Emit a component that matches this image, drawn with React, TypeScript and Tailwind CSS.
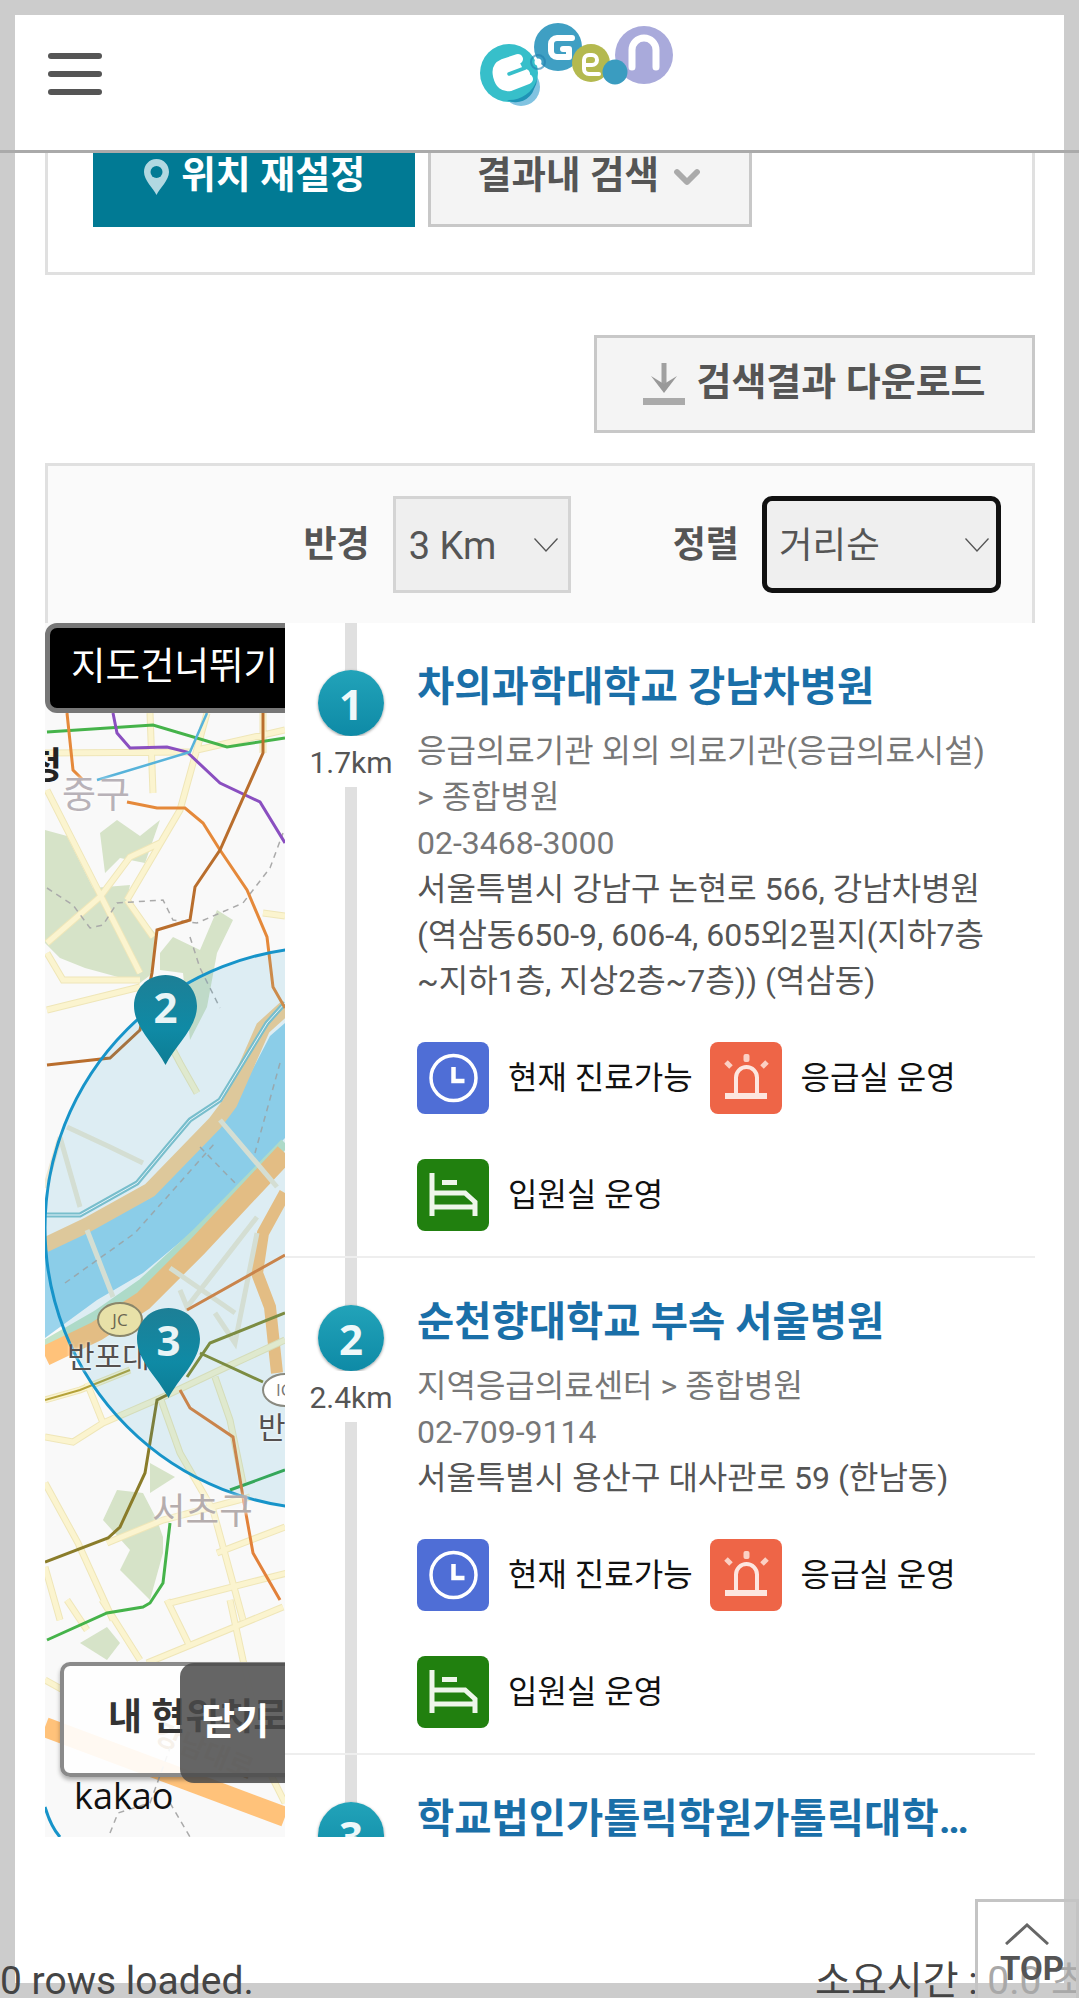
import { ChevronDown } from "lucide-react";

const kr = "font-['Roboto','Noto_Sans_CJK_KR',sans-serif]";

const EgenLogo = () => (
  <svg width="200" height="100" viewBox="35 15 200 100" className="block">
    <ellipse cx="80" cy="87" rx="19" ry="19" fill="#6bb8dc" opacity="0.85" />
    <circle cx="68" cy="73" r="29" fill="#37bfca" />
    <path d="M66 100a29 29 0 0 0 30-21 19 19 0 0 1-3 10 19 19 0 0 1-27 11z" fill="#1f93b6" />
    <circle cx="117" cy="47" r="24" fill="#3f9fc3" />
    <circle cx="150" cy="63" r="19" fill="#b4b94f" />
    <circle cx="203" cy="55" r="29" fill="#a9aadb" />
    <circle cx="174" cy="72" r="12.5" fill="#3a9cc0" />
    <path d="M77 59L62 64Q55 67 57 76Q60 88 69 86L87 79M60 70L66 82 84 74" fill="#fff" stroke="#fff" strokeWidth="10" strokeLinecap="round" strokeLinejoin="round" />
    <path d="M68 74L84 68" fill="none" stroke="#37bfca" strokeWidth="3.5" strokeLinecap="round" />
    <circle cx="97" cy="62" r="3.5" fill="#fff" />
    <circle cx="97" cy="62" r="7" fill="none" stroke="#1f7fae" strokeWidth="2" opacity="0.6" />
    <path d="M131 38h-15a6 6 0 0 0-6 6v7a6 6 0 0 0 6 6h12v-8h-6" fill="none" stroke="#fff" strokeWidth="6" strokeLinecap="round" strokeLinejoin="round" />
    <path d="M158 74h-10a5 5 0 0 1-5-5v-9a5 5 0 0 1 5-5h3a5 5 0 0 1 0 10h-6" fill="none" stroke="#fff" strokeWidth="4" strokeLinecap="round" />
    <path d="M191 67V50a12 12 0 0 1 24 0v17" fill="none" stroke="#fff" strokeWidth="7" strokeLinecap="round" />
  </svg>
);

const PinIcon = () => (
  <svg width="27" height="36" viewBox="0 0 27 36" className="mt-[5px] shrink-0">
    <path d="M13.5 0C6 0 1 6 1 13c0 8 9 16 12.5 23C17 29 26 21 26 13 26 6 21 0 13.5 0z" fill="#b1d8e1" />
    <circle cx="13.5" cy="13" r="6" fill="#017a94" />
  </svg>
);

const DownloadIcon = () => (
  <svg width="42" height="42" viewBox="0 0 42 42" className="shrink-0">
    <path d="M21 0v24" stroke="#a0a0a0" strokeWidth="5" />
    <path d="M8 13l13 8 13-8-13 17z" fill="#999" />
    <rect x="0" y="35" width="42" height="7" fill="#aaa" />
  </svg>
);

const SelectChevron = () => (
  <svg width="24" height="14" viewBox="0 0 24 14" className="shrink-0">
    <path d="M0.5 0.5L12 13 23.5 0.5" fill="none" stroke="#555" strokeWidth="1.3" />
  </svg>
);

const ClockIcon = () => (
  <svg width="72" height="72" viewBox="0 0 72 72" className="shrink-0 rounded-[8px] bg-[#4f6ed6]">
    <circle cx="36.5" cy="36" r="22.5" fill="none" stroke="#fff" strokeWidth="3.5" />
    <path d="M36.5 25v14h11" fill="none" stroke="#fff" strokeWidth="4.5" />
  </svg>
);

const SirenIcon = () => (
  <svg width="72" height="72" viewBox="0 0 72 72" className="shrink-0 rounded-[8px] bg-[#ee6547]">
    <rect x="15" y="51" width="42" height="6" fill="#fde6df" />
    <path d="M26 51V35.5a10.5 10.5 0 0 1 21 0V51" fill="none" stroke="#fde6df" strokeWidth="4" />
    <rect x="33.5" y="12" width="6" height="8" rx="2" fill="#fbd0c4" />
    <path d="M16 20l5 5M57 20l-5 5" stroke="#fbd0c4" strokeWidth="5" />
  </svg>
);

const BedIcon = () => (
  <svg width="72" height="72" viewBox="0 0 72 72" className="shrink-0 rounded-[8px] bg-[#21800f]">
    <path d="M15 14V57M15 34H48L58 43V57M15 48H58" fill="none" stroke="#eef6ea" strokeWidth="5" />
    <rect x="25" y="21" width="15" height="5" fill="#eef6ea" />
  </svg>
);

const MapPin = ({ n, className }: { n: number; className: string }) => (
  <div className={`absolute h-[92px] w-[65px] ${className}`}>
    <svg width="65" height="92" viewBox="0 0 65 92" className="absolute inset-0">
      <defs>
        <linearGradient id={`pin${n}`} x1="0" y1="0" x2="0" y2="1">
          <stop offset="0" stopColor="#1d7f96" />
          <stop offset="0.6" stopColor="#0f8aa5" />
          <stop offset="1" stopColor="#0d7c94" />
        </linearGradient>
      </defs>
      <path d="M32.5 1C14 1 1 15 1 32c0 22 22 40 31.5 59C42 72 64 54 64 32 64 15 51 1 32.5 1z" fill={`url(#pin${n})`} />
    </svg>
    <span className="absolute inset-x-0 top-[11px] text-center font-['Open_Sans',sans-serif] text-[42px] leading-[44px] font-bold text-[#e8f4f6]">{n}</span>
  </div>
);

const minorRoads =
  "M15 514L35 584M42 607L68 674M22 504L65 524L98 540M175 497L232 564M135 667L142 684L212 594M170 690L190 720L212 610M125 645L190 690M0 565L15 514";
const roads =
  "M2 167L95 350M2 320L55 274L85 234L115 220M82 277L135 187L162 90M82 277L108 314M2 387L95 364M105 90L108 170M0 130L145 129M152 127L240 107M218 90V130M218 290L240 293M2 330L18 357L95 357M95 364L135 440L152 470M115 774L135 830L168 887L198 997M170 754L185 797L198 860M0 814L28 819L58 800L118 774L175 747L240 717M0 777L35 767L85 747M58 800L42 760M0 860L33 920L68 997M0 944L15 997M62 920L118 897L205 874M125 980L242 950M172 930L240 904M22 977L42 1007M57 977L95 1037M122 977L145 1024M185 977L198 1037M102 1040L238 984M0 1057L18 1067M198 1037L210 1090M225 1150L240 1180";

const KakaoMap = () => (
  <svg width="240" height="1214" viewBox="0 0 240 1214" className="absolute inset-0">
    <rect width="240" height="1214" fill="#f9f9f9" />
    {/* parks */}
    <g fill="#d6e3c8">
      <path d="M0 207L22 213 48 265 85 262 82 277 110 310 108 350 95 360 40 345 15 335 0 320z" />
      <path d="M55 210L72 197 95 213 115 197 100 240 75 235 60 250z" />
      <path d="M115 330L128 314 155 327 172 287 188 297 172 330 162 384 145 417 138 350 115 347z" />
      <path d="M72 867L98 870 112 897 118 914 118 930 105 977 75 947 85 927 58 897z" />
      <path d="M105 840L130 854 105 870z" />
      <path d="M35 1020L62 1004 75 1020 62 1037z" />
    </g>
    {/* river */}
    <path d="M0 625L42 608 105 575 175 505 190 480 225 413 240 400V515L152 605 98 650 52 677 0 715z" fill="#9bd4ec" />
    <path d="M0 722L52 692 98 660 152 610 240 520" fill="none" stroke="#c2e3c8" strokeWidth="10" />
    {/* expressways */}
    <path d="M0 622L42 602 105 567 170 500 185 480 218 405 240 385" fill="none" stroke="#f9cf95" strokeWidth="15" />
    <path d="M0 733L52 708 98 678 152 624 240 530" fill="none" stroke="#ffc27a" strokeWidth="20" />
    <path d="M240 570L218 610 212 650 225 684 232 750" fill="none" stroke="#ffc27a" strokeWidth="12" />
    <path d="M0 1104L240 1194" fill="none" stroke="#ffc27a" strokeWidth="20" />
    <text x="0" y="0" transform="translate(108 1118) rotate(22)" fontSize="28" fontWeight="700" fill="#a8702c" fontFamily="'Noto Sans CJK KR', sans-serif">강남대로</text>
    <path d="M0 592L35 592 92 560 122 524 145 497 175 477 222 400 240 380" fill="none" stroke="#86c3cc" strokeWidth="5" />
    <path d="M0 592L35 592 92 560 122 524 145 497 175 477 222 400 240 380" fill="none" stroke="#fff" strokeWidth="1" />
    {/* roads */}
    <path d={minorRoads} fill="none" stroke="#eee8d4" strokeWidth="5" />
    <path d={roads} fill="none" stroke="#efe6b8" strokeWidth="7" />
    <path d={roads} fill="none" stroke="#fbf4cf" strokeWidth="5" />
    {/* dashed boundaries */}
    <path d="M2 265L28 282 45 305 58 302 72 280 118 277 128 297 152 300 198 280 225 245 238 210M145 314L155 345 175 385M235 440L210 530M20 660L90 610 170 520M155 524L190 560M65 1210L73 1190 105 1180 125 1125M125 1180L145 1214" fill="none" stroke="#aaa" strokeWidth="1.5" strokeDasharray="6 5" />
    {/* subway lines */}
    <path d="M2 109L108 102 182 124 240 115" fill="none" stroke="#45b34a" strokeWidth="3" />
    <path d="M125 900L118 960 105 980 98 984 62 990 2 1017" fill="none" stroke="#45b34a" strokeWidth="3" />
    <path d="M185 867L240 847" fill="none" stroke="#39a94a" strokeWidth="3" />
    <path d="M68 90L72 110 85 125 122 124 142 129 175 160 215 179 240 220" fill="none" stroke="#8a4fc0" strokeWidth="3" />
    <path d="M162 90L145 129 52 157" fill="none" stroke="#57b3da" strokeWidth="2.5" />
    <path d="M22 90L28 147 38 157M82 179L112 185 140 185 158 200 175 227 202 267 222 314 228 364 240 385" fill="none" stroke="#e5893a" strokeWidth="3" />
    <path d="M218 90V130L175 227 150 264 145 297 112 307 107 350 95 407 65 435 2 442" fill="none" stroke="#b96e2d" strokeWidth="3" />
    <path d="M142 687L240 632M135 767L145 785 188 814 198 874 208 930 235 977" fill="none" stroke="#e2813a" strokeWidth="3" />
    <path d="M0 939L63 915 75 904 100 850 112 777 122 772" fill="none" stroke="#8a7c2a" strokeWidth="3" />
    <path d="M142 754L165 720 240 690M155 730L218 759" fill="none" stroke="#8a8a2f" strokeWidth="3" />
    <path d="M0 777L35 767 85 747" fill="none" stroke="#b5a23a" strokeWidth="2" />
    {/* radius circle */}
    <circle cx="281" cy="605" r="281" fill="#1a9ad0" fillOpacity="0.12" stroke="#1794c9" strokeWidth="3" />
    <path d="M0 1184Q6 1204 15 1214" fill="none" stroke="#1794c9" strokeWidth="3" />
  </svg>
);

const MapPanel = () => (
  <div className="relative h-[1214px] w-[240px] shrink-0 overflow-hidden">
    <KakaoMap />
    <span className="absolute top-[122px] left-[-17px] text-[37px] leading-[44px] font-bold text-[#222]">청</span>
    <span className="absolute top-[151px] left-[17px] text-[37px] leading-[44px] text-[#b8b2b8] [text-shadow:0_0_4px_#fff]">중구</span>
    <span className="absolute top-[679px] left-[52px] flex h-[35px] w-[46px] items-center justify-center rounded-[50%] border-2 border-[#8a866a] bg-[#e8e1a8] font-['Open_Sans',sans-serif] text-[17px] text-[#6b6650]">JC</span>
    <span className="absolute top-[716px] left-[22px] text-[30px] leading-[36px] text-[#55504f] [text-shadow:0_0_3px_#fff]">반포대</span>
    <span className="absolute top-[750px] left-[217px] h-[34px] w-[46px] rounded-[50%] border-2 border-[#8a8a80] bg-white pl-[12px] font-['Open_Sans',sans-serif] text-[17px] leading-[30px] text-[#777]">IC</span>
    <span className="absolute top-[787px] left-[213px] text-[30px] leading-[36px] text-[#55504f] [text-shadow:0_0_3px_#fff]">반</span>
    <span className="absolute top-[867px] left-[107px] text-[36.5px] leading-[44px] whitespace-nowrap text-[#b5adad] [text-shadow:0_0_4px_#fff]">서초구</span>
    <MapPin n={2} className="top-[351px] left-[88px]" />
    <MapPin n={3} className="top-[684px] left-[91px]" />

    <div className="absolute top-0 left-0 h-[90px] w-[260px] rounded-[12px] border-[5px] border-[#777] bg-black">
      <span className="block pt-[10px] pl-[21px] text-[37.5px] leading-[56px] whitespace-nowrap text-white">지도건너뛰기</span>
    </div>
    <div className="absolute top-[1039px] left-[15px] h-[115px] w-[300px] rounded-[10px] border-[4px] border-[#8a8a8a] bg-white/90 shadow-[0_3px_4px_rgba(0,0,0,0.3)]">
      <span className="block pt-[28px] pl-[44px] text-[37px] leading-[48px] font-bold whitespace-nowrap text-[#333]">내 현위치로</span>
    </div>
    <div className="absolute top-[1040px] left-[135px] h-[120px] w-[140px] rounded-[14px] bg-[#4a4a4a]/85">
      <span className="block pt-[36px] pl-[21px] text-[37px] leading-[48px] font-bold whitespace-nowrap text-white">닫기</span>
    </div>
    <span className="absolute top-[1151px] left-[29px] font-['Open_Sans',sans-serif] text-[36px] leading-[44px] text-[#111]">kakao</span>
  </div>
);

type Badge = { icon: "clock" | "siren" | "bed"; label: string };

const badges: Badge[] = [
  { icon: "clock", label: "현재 진료가능" },
  { icon: "siren", label: "응급실 운영" },
  { icon: "bed", label: "입원실 운영" },
];

const hospitals = [
  {
    no: 1,
    name: "차의과학대학교 강남차병원",
    km: "1.7km",
    lines: ["응급의료기관 외의 의료기관(응급의료시설)", "> 종합병원", "02-3468-3000"],
    address: ["서울특별시 강남구 논현로 566, 강남차병원", "(역삼동650-9, 606-4, 605외2필지(지하7층", "~지하1층, 지상2층~7층)) (역삼동)"],
  },
  {
    no: 2,
    name: "순천향대학교 부속 서울병원",
    km: "2.4km",
    lines: ["지역응급의료센터 > 종합병원", "02-709-9114"],
    address: ["서울특별시 용산구 대사관로 59 (한남동)"],
  },
];

const NumberDot = ({ n }: { n: number }) => (
  <div className="flex h-[66px] w-[66px] shrink-0 items-center justify-center rounded-full bg-[linear-gradient(#22a3b9,#0e8aa6)] font-['Open_Sans',sans-serif] text-[42px] font-bold text-[#eef8fa] shadow-[0_1px_3px_rgba(0,0,0,0.4)]">
    {n}
  </div>
);

const HospitalRow = ({ h }: { h: (typeof hospitals)[number] }) => (
  <div className="flex border-b-[2px] border-[#eee] pt-[47px] pb-[25px]">
    <div className="flex w-[132px] shrink-0 flex-col items-center">
      <NumberDot n={h.no} />
      <span className="h-[51px] bg-white text-[30px] leading-[54px] text-[#555]">{h.km}</span>
    </div>
    <div className="min-w-0 flex-1">
      <h3 className="-mt-[9px] text-[40.5px] leading-[52px] font-bold whitespace-nowrap text-[#1a6fa8]">{h.name}</h3>
      <div className="mt-[15px] text-[32px] leading-[46px] text-[#777]">
        {h.lines.map((l) => (
          <p key={l} className="whitespace-nowrap">{l}</p>
        ))}
        {h.address.map((l) => (
          <p key={l} className="whitespace-nowrap text-[#555]">{l}</p>
        ))}
      </div>
      <div className="mt-[38px] flex flex-wrap">
        {badges.map((b) => (
          <div key={b.label} className="mr-[17px] mb-[45px] flex items-center last:mb-0">
            {b.icon === "clock" && <ClockIcon />}
            {b.icon === "siren" && <SirenIcon />}
            {b.icon === "bed" && <BedIcon />}
            <span className="ml-[19px] text-[32px] leading-[40px] whitespace-nowrap text-[#111]">{b.label}</span>
          </div>
        ))}
      </div>
    </div>
  </div>
);

export default function App() {
  return (
    <div className={`relative h-[1998px] w-[1079px] overflow-hidden bg-[#ccc] ${kr}`}>
      <div className="mx-[15px] mt-[15px] h-[1968px] bg-white">
        {/* top bar */}
        <header className="relative -mx-[15px] flex h-[138px] justify-center border-b-[3px] border-[#aaa]">
          <div className="absolute inset-x-[15px] inset-y-0 bg-white" />
          <div className="absolute top-[38px] left-[48px] flex w-[54px] flex-col gap-[12px]">
            <span className="h-[6px] rounded-full bg-[#555]" />
            <span className="h-[6px] rounded-full bg-[#555]" />
            <span className="h-[6px] rounded-full bg-[#555]" />
          </div>
          <div className="relative ml-[72px]">
            <EgenLogo />
          </div>
        </header>

        <div className="pr-[29px] pl-[30px]">
          {/* search box, scrolled under the header */}
          <div className="flex h-[122px] gap-[13px] border-x-[3px] border-b-[3px] border-[#e0e0e0] pl-[45px]">
            <button className="flex h-[74px] w-[322px] items-start justify-center gap-[11px] bg-[#017a94] pt-[1px] text-[38px] leading-[42px] font-bold text-white">
              <PinIcon />
              위치 재설정
            </button>
            <button className="flex h-[74px] w-[324px] items-start justify-center gap-[8px] border-x-[3px] border-b-[3px] border-[#c8c8c8] bg-[#f4f4f4] pt-[1px] pl-[4px] text-[37.5px] leading-[42px] font-bold text-[#555]">
              결과내 검색
              <ChevronDown size={40} strokeWidth={3.5} className="mt-[3px] text-[#aaa]" />
            </button>
          </div>

          <div className="mt-[60px] flex justify-end">
            <button className="flex h-[98px] w-[441px] items-center justify-center gap-[11px] border-[3px] border-[#c8c8c8] bg-[#f4f4f4] text-[38px] leading-[42px] font-bold text-[#555]">
              <DownloadIcon />
              <span className="-mt-[5px]">검색결과 다운로드</span>
            </button>
          </div>

          {/* filter panel */}
          <div className="mt-[30px] flex h-[160px] items-start justify-end border-x-[3px] border-t-[3px] border-[#e0e0e0] bg-[#fafafa] pt-[30px] pr-[31px]">
            <span className="mt-[27px] text-[36px] leading-[44px] font-bold text-[#555]">반경</span>
            <div className="ml-[23px] flex h-[97px] w-[178px] items-center justify-between border-[3px] border-[#d4d4d4] bg-[#efefef] pr-[10px] pl-[13px] text-[38px] text-[#555]">
              <span className="pt-[3px]">3 Km</span>
              <SelectChevron />
            </div>
            <span className="mt-[27px] ml-[102px] text-[36px] leading-[44px] font-bold text-[#555]">정렬</span>
            <div className="ml-[23px] flex h-[97px] w-[239px] items-center justify-between rounded-[10px] border-[5px] border-[#111] bg-[#efefef] pr-[7px] pl-[12px] text-[36.5px] text-[#555]">
              <span className="pt-[3px]">거리순</span>
              <SelectChevron />
            </div>
          </div>

          {/* map + result list */}
          <div className="flex h-[1214px] overflow-hidden">
            <MapPanel />
            <div className="relative min-w-0 flex-1 overflow-hidden bg-white">
              <div className="absolute top-0 bottom-0 left-[60px] w-[12px] bg-[#e0e0e0]" />
              <div className="relative">
                {hospitals.map((h) => (
                  <HospitalRow key={h.no} h={h} />
                ))}
                <div className="flex pt-[47px]">
                  <div className="flex w-[132px] shrink-0 flex-col items-center">
                    <NumberDot n={3} />
                  </div>
                  <h3 className="-mt-[9px] w-[570px] truncate text-[40.5px] leading-[52px] font-bold text-[#1a6fa8]">학교법인가톨릭학원가톨릭대학교 서울성모병원</h3>
                </div>
              </div>
            </div>
          </div>
        </div>
      </div>

      {/* footer status, overlaps the page frame */}
      <div className="absolute right-0 bottom-[-6px] left-0 h-[46px] text-[39px] leading-[46px] text-[#444]">
        <span>0 rows loaded.</span>
        <span className="absolute top-0 left-[815px] whitespace-nowrap">
          소요시간 : <span className="text-[#a8a8a8]">0.0 초</span>
        </span>
      </div>
      <div className="absolute top-[1899px] right-0 h-[110px] w-[104px] border-[3px] border-[#c4c4c4] pl-[10px] text-center">
        <svg width="44" height="22" viewBox="0 0 44 22" className="mx-auto mt-[21px] block -translate-x-[5px]">
          <path d="M1 21L22 2l21 19" fill="none" stroke="#666" strokeWidth="3" />
        </svg>
        <span className="block pt-[6px] text-[33px] leading-[36px] font-bold text-[#555]">TOP</span>
      </div>
    </div>
  );
}
